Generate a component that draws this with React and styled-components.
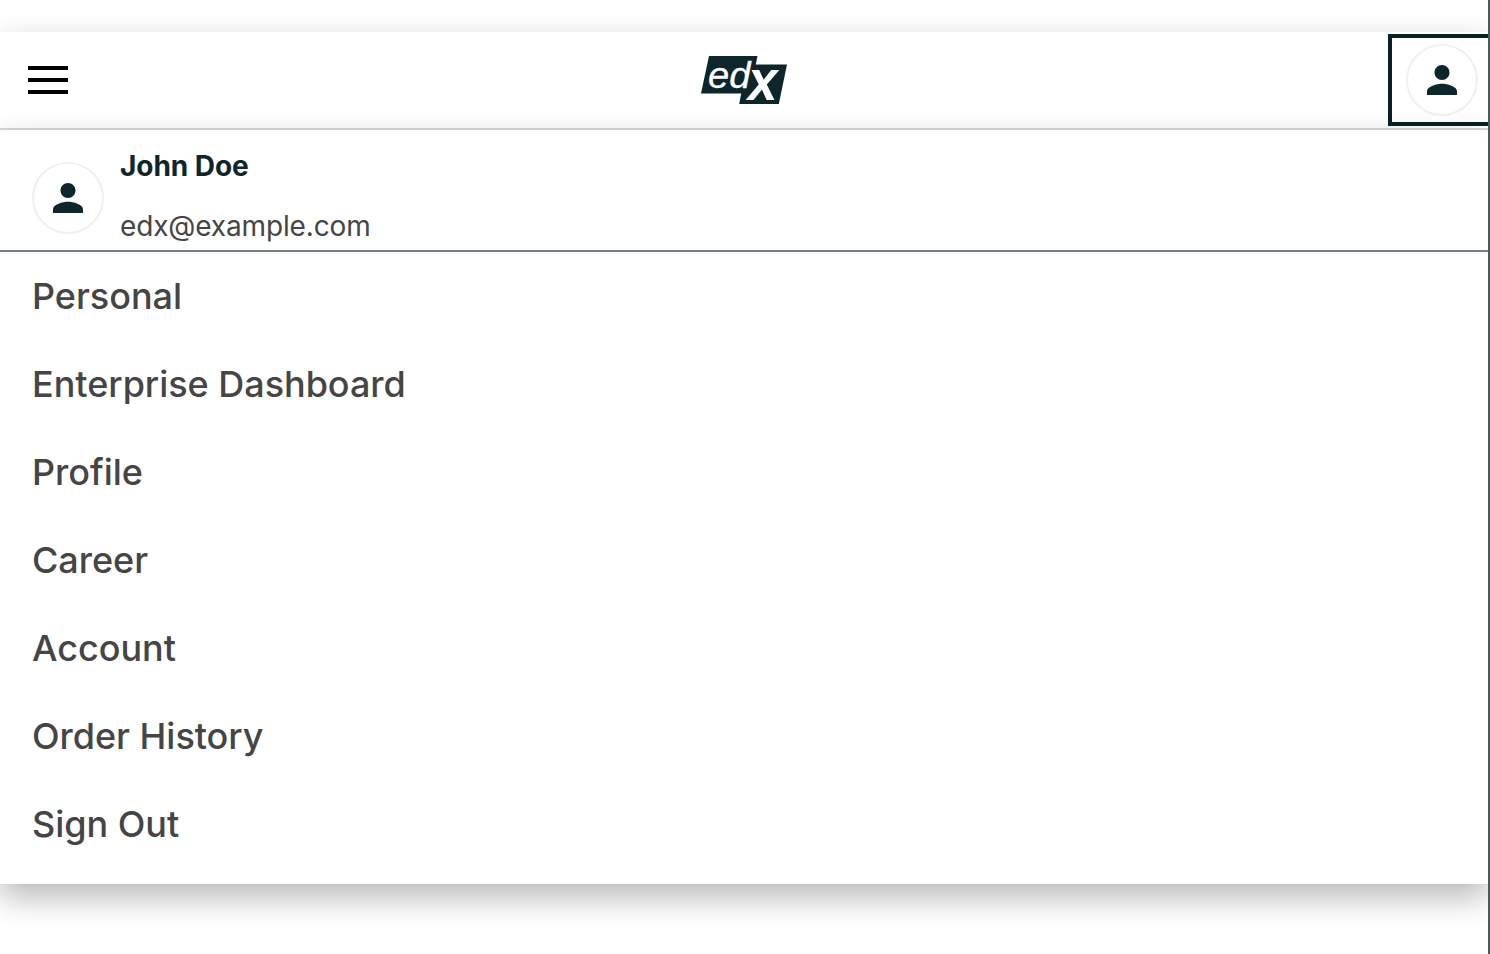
import React from "react";
import styled, { createGlobalStyle } from "styled-components";

const GlobalStyle = createGlobalStyle`
  * { box-sizing: border-box; }
  body { margin: 0; background: #fff; font-family: Inter, "Liberation Sans", sans-serif; }
`;

const Page = styled.div`
  width: 1490px;
  height: 954px;
  padding-top: 32px;
  overflow: hidden;
  background: #fff;
  border-right: 2px solid #455a64;
`;

const elevation = "0 14px 30px rgba(0,0,0,.15), 0 12px 30px rgba(0,0,0,.15)";

const Header = styled.header`
  display: grid;
  grid-template-columns: 1fr auto 1fr;
  align-items: center;
  height: 98px;
  background: #fff;
  border-bottom: 2px solid #d8d8d8;
  box-shadow: ${elevation};
`;

const MenuButton = styled.button`
  display: flex;
  flex-direction: column;
  gap: 8px;
  width: 40px;
  margin-left: 28px;
  padding: 0;
  border: 0;
  background: none;
`;

const Bar = styled.span`
  height: 4px;
  background: #000;
`;

const Logo = styled.svg`
  display: block;
  width: 86px;
  height: 48px;
  overflow: visible;
`;

const AccountButton = styled.button`
  justify-self: end;
  display: flex;
  align-items: center;
  width: 100px;
  height: 92px;
  padding: 0 0 0 14px;
  border: 4px solid #0a2024;
  border-right: 0;
  background: #fff;
`;

const AvatarCircle = styled.span`
  display: flex;
  flex: none;
  align-items: center;
  justify-content: center;
  width: 72px;
  height: 72px;
  border: 2px solid #f0f0f0;
  border-radius: 50%;
  background: #fff;
`;

const PersonIcon = styled.svg`
  width: 30px;
  height: 30px;
  fill: #0d262b;
`;

const Menu = styled.section`
  position: relative;
  height: 754px;
  background: #fff;
  box-shadow: ${elevation};
`;

const UserPanel = styled.div`
  display: flex;
  align-items: center;
  gap: 16px;
  height: 122px;
  padding: 16px 32px 0;
  border-bottom: 2px solid #707f88;
`;

const UserText = styled.div`
  display: flex;
  flex-direction: column;
  gap: 16px;
  height: 108px;
  font-size: 28px;
  line-height: 44px;
`;

const UserName = styled.strong`
  font-weight: 700;
  letter-spacing: -0.06px;
  color: #0d262b;
`;

const UserEmail = styled.span`
  letter-spacing: -0.14px;
  color: #454545;
`;

const MenuList = styled.nav`
  display: flex;
  flex-direction: column;
`;

const MenuItem = styled.a`
  height: 88px;
  padding: 0 32px;
  font-size: 36px;
  font-weight: 500;
  line-height: 88px;
  letter-spacing: -0.03px;
  color: #454545;
`;

const items = ["Personal", "Enterprise Dashboard", "Profile", "Career", "Account", "Order History", "Sign Out"];

function Avatar() {
  return (
    <AvatarCircle>
      <PersonIcon viewBox="4 4 16 16">
        <path d="M12 12c2.21 0 4-1.79 4-4s-1.79-4-4-4-4 1.79-4 4 1.79 4 4 4zm0 2c-2.67 0-8 1.34-8 4v2h16v-2c0-2.66-5.33-4-8-4z" />
      </PersonIcon>
    </AvatarCircle>
  );
}

export default function App() {
  return (
    <>
      <GlobalStyle />
      <Page>
        <Header>
          <MenuButton aria-label="Main menu">
            <Bar />
            <Bar />
            <Bar />
          </MenuButton>
          <Logo viewBox="0 0 86 48" role="img" aria-label="edX">
            <path d="M8 0H56.5L54.8 8.4H86L77.8 48H38.2L40.2 37.4H0Z" fill="#0d262b" />
            <g fill="#fff" fontFamily="Liberation Sans, sans-serif" fontStyle="italic">
              <text x="7" y="32.3" fontSize="37" textLength="42.5" lengthAdjust="spacingAndGlyphs" stroke="#fff" strokeWidth=".3">ed</text>
              <text x="47" y="43.5" fontSize="58" fontWeight="700" textLength="29.5" lengthAdjust="spacingAndGlyphs">x</text>
            </g>
          </Logo>
          <AccountButton aria-label="Account menu">
            <Avatar />
          </AccountButton>
        </Header>
        <Menu>
          <UserPanel>
            <Avatar />
            <UserText>
              <UserName>John Doe</UserName>
              <UserEmail>edx@example.com</UserEmail>
            </UserText>
          </UserPanel>
          <MenuList>
            {items.map((item) => (
              <MenuItem key={item}>{item}</MenuItem>
            ))}
          </MenuList>
        </Menu>
      </Page>
    </>
  );
}
